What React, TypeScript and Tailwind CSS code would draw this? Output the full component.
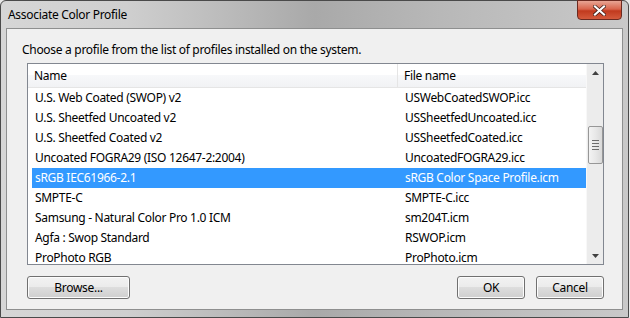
import { useState } from 'react';

type Profile = { name: string; file: string };

const PROFILES: Profile[] = [
  { name: 'U.S. Web Coated (SWOP) v2', file: 'USWebCoatedSWOP.icc' },
  { name: 'U.S. Sheetfed Uncoated v2', file: 'USSheetfedUncoated.icc' },
  { name: 'U.S. Sheetfed Coated v2', file: 'USSheetfedCoated.icc' },
  { name: 'Uncoated FOGRA29 (ISO 12647-2:2004)', file: 'UncoatedFOGRA29.icc' },
  { name: 'sRGB IEC61966-2.1', file: 'sRGB Color Space Profile.icm' },
  { name: 'SMPTE-C', file: 'SMPTE-C.icc' },
  { name: 'Samsung - Natural Color Pro 1.0 ICM', file: 'sm204T.icm' },
  { name: 'Agfa : Swop Standard', file: 'RSWOP.icm' },
  { name: 'ProPhoto RGB', file: 'ProPhoto.icm' },
];

const FONT = "font-['Noto_Sans',_'DejaVu_Sans',_sans-serif]";

function WinButton({ label, width }: { label: string; width: string }) {
  return (
    <button
      className={`${width} h-[23px] rounded-[3px] border border-[#707070] bg-[linear-gradient(#f2f2f2_0%,#ebebeb_50%,#dddddd_50%,#cfcfcf_100%)] shadow-[inset_0_0_0_1px_#fcfcfc] text-[12px] text-black leading-none`}
    >
      {label}
    </button>
  );
}

export default function App() {
  const [selected, setSelected] = useState(4);

  return (
    <div className={`w-[630px] h-[318px] bg-[#e8e8e8] ${FONT} tracking-[-0.3px]`}>
      {/* Window frame */}
      <div className="relative w-[629px] h-[318px] rounded-t-[6px] border border-[#4a4a4a] bg-[linear-gradient(90deg,#d6d6d6_0%,#cfcfcf_20%,#a9a9a9_50%,#b8b8b8_70%,#c9c9c9_100%)] flex flex-col">
        {/* Title bar */}
        <div className="h-[27px] flex items-center pl-[7px] text-[12px] text-black">
          Associate Color Profile
        </div>
        <div className="absolute top-[-1px] right-[6px] w-[45px] h-[20px] rounded-b-[4px] border border-[#6b2a20] bg-[linear-gradient(#e8a594_0%,#d9654c_45%,#c13a1e_55%,#d45a3c_100%)] flex items-center justify-center">
          <svg width="13" height="11" viewBox="0 0 13 11">
            <path d="M2 1.5 L11 9.5 M11 1.5 L2 9.5" stroke="#3a1a14" strokeWidth="3.6" strokeLinecap="square" />
            <path d="M2 1.5 L11 9.5 M11 1.5 L2 9.5" stroke="#ffffff" strokeWidth="2.2" strokeLinecap="square" />
          </svg>
        </div>

        {/* Client area */}
        <div className="mx-[5px] h-[282px] border border-[#8e8f8f] bg-[#f0f0f0] flex flex-col px-[20px] pr-[18px]">
          <div className="mt-[13px] ml-[-5px] h-[16px] leading-[16px] text-[12px] text-black">
            Choose a profile from the list of profiles installed on the system.
          </div>

          {/* List view */}
          <div className="mt-[5px] h-[202px] border border-[#828790] bg-white flex overflow-hidden">
            <div className="flex-1 flex flex-col overflow-hidden">
              {/* Header */}
              <div className="h-[24px] shrink-0 flex border-b border-[#e5e5e5] bg-[linear-gradient(#ffffff_0%,#ffffff_50%,#f7f8fa_50%,#f1f2f4_100%)] text-[12px] text-black">
                <div className="w-[370px] pl-[6px] flex items-center border-r border-[#e5e5e5]">Name</div>
                <div className="flex-1 pl-[6px] flex items-center">File name</div>
              </div>
              {/* Rows */}
              <div className="pl-[4px] flex flex-col">
                {PROFILES.map((p, i) => (
                  <div
                    key={p.name}
                    onClick={() => setSelected(i)}
                    className={`h-[20px] shrink-0 flex items-center text-[12px] leading-[16px] ${
                      i === selected ? 'bg-[#3399ff] text-white' : 'text-black'
                    }`}
                  >
                    <div className="w-[367px] pl-[3px] whitespace-nowrap">{p.name}</div>
                    <div className="flex-1 pl-[6px] whitespace-nowrap">{p.file}</div>
                  </div>
                ))}
              </div>
            </div>

            {/* Scrollbar */}
            <div className="w-[17px] shrink-0 bg-[#ececec] border-l border-[#f8f8f8] flex flex-col items-center">
              <div className="h-[17px] w-full flex items-center justify-center">
                <svg width="7" height="4" viewBox="0 0 7 4">
                  <path d="M0 4 L3.5 0 L7 4 Z" fill="#404040" />
                </svg>
              </div>
              <div className="h-[45px]" />
              <div className="w-[15px] h-[38px] rounded-[2px] border border-[#979797] bg-[linear-gradient(90deg,#f3f3f3_0%,#e8e8e8_50%,#d9d9d9_100%)] flex flex-col items-center justify-center gap-[2px]">
                <div className="w-[7px] h-[1px] bg-[#6c6c6c]" />
                <div className="w-[7px] h-[1px] bg-[#6c6c6c]" />
                <div className="w-[7px] h-[1px] bg-[#6c6c6c]" />
                <div className="w-[7px] h-[1px] bg-[#6c6c6c]" />
              </div>
              <div className="flex-1" />
              <div className="h-[17px] w-full flex items-center justify-center">
                <svg width="7" height="4" viewBox="0 0 7 4">
                  <path d="M0 0 L3.5 4 L7 0 Z" fill="#404040" />
                </svg>
              </div>
            </div>
          </div>

          {/* Buttons */}
          <div className="mt-[11px] flex items-center">
            <WinButton label="Browse..." width="w-[103px]" />
            <div className="flex-1" />
            <WinButton label="OK" width="w-[68px]" />
            <div className="w-[11px]" />
            <WinButton label="Cancel" width="w-[68px]" />
          </div>
        </div>
      </div>
    </div>
  );
}
